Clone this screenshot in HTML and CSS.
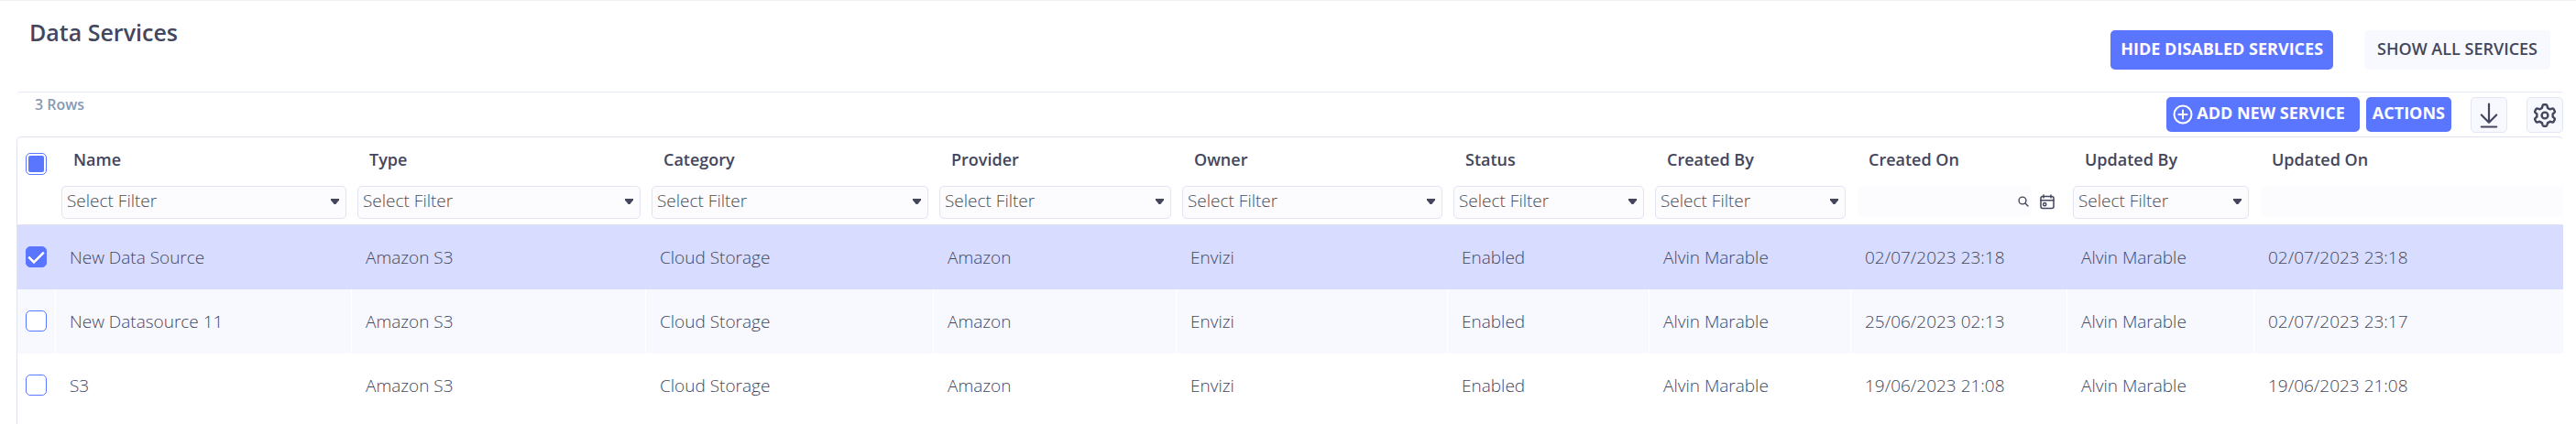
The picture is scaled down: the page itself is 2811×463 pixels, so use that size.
FILE: index.html
```html
<!DOCTYPE html>
<html lang="en">
<head>
<meta charset="utf-8">
<title>Data Services</title>
<link rel="stylesheet" href="styles.css">
</head>
<body>
<header class="page-head">
  <h1 class="title">Data Services</h1>
  <div class="head-actions">
    <button type="button" class="btn primary tall">HIDE DISABLED SERVICES</button>
    <button type="button" class="btn tall plain">SHOW ALL SERVICES</button>
  </div>
</header>
<main class="panel">
  <div class="toolbar">
    <span class="row-count">3 Rows</span>
    <div class="tools">
      <button type="button" class="btn primary with-icon"><svg width="22" height="22" viewBox="0 0 22 22" fill="none" stroke="currentColor" stroke-width="2" stroke-linecap="round" aria-hidden="true"><circle cx="11" cy="11" r="9.5"/><path d="M11 6.5v9M6.5 11h9"/></svg>ADD NEW SERVICE</button>
      <button type="button" class="btn primary">ACTIONS</button>
      <button type="button" class="btn-icon download" aria-label="Download"><svg width="20" height="28" viewBox="0 0 20 28" fill="none" stroke="currentColor" stroke-width="2.2" stroke-linecap="round" stroke-linejoin="round" aria-hidden="true"><path d="M10 1.5v20M1.8 13.5l8.2 8.3 8.2-8.3M1.8 26.5h16.4"/></svg></button>
      <button type="button" class="btn-icon" aria-label="Settings"><svg width="28" height="28" viewBox="-14 -14 28 28" fill="none" stroke="currentColor" stroke-width="2.4" stroke-linejoin="round" aria-hidden="true"><circle r="3.4"/><path d="M-3-8.200L-2.500-10.500Q-2.200-11.700-1.200-11.700H1.200Q2.200-11.700 2.500-10.500L3-8.200Q4.300-7.600 5.600-6.700L7.700-7.400Q9-7.800 9.600-6.800L10.800-4.700Q11.300-3.900 10.500-3.100L8.600-1.500Q8.800 0 8.600 1.500L10.500 3.100Q11.300 3.900 10.800 4.700L9.600 6.800Q9 7.800 7.700 7.400L5.600 6.700Q4.300 7.600 3 8.200L2.500 10.500Q2.200 11.700 1.200 11.700H-1.200Q-2.200 11.700-2.500 10.500L-3 8.200Q-4.300 7.600-5.600 6.700L-7.700 7.400Q-9 7.800-9.600 6.800L-10.800 4.700Q-11.300 3.900-10.500 3.100L-8.600 1.500Q-8.800 0-8.600-1.500L-10.500-3.100Q-11.300-3.900-10.800-4.700L-9.600-6.800Q-9-7.800-7.700-7.400L-5.600-6.700Q-4.300-7.600-3-8.200z"/></svg></button>
    </div>
  </div>
  <div class="table-wrap">
    <table class="grid">
      <colgroup>
        <col class="c-check"><col class="c-name"><col class="c-type"><col class="c-category"><col class="c-provider"><col class="c-owner"><col class="c-short"><col class="c-short"><col class="c-created"><col class="c-updated"><col>
      </colgroup>
      <thead>
        <tr>
          <th class="check-cell"><input type="checkbox" class="check mixed" aria-label="Select all rows"></th>
          <th scope="col"><label class="label" for="f-name">Name</label><div class="filter"><select id="f-name"><option>Select Filter</option></select></div></th>
          <th scope="col"><label class="label" for="f-type">Type</label><div class="filter"><select id="f-type"><option>Select Filter</option></select></div></th>
          <th scope="col"><label class="label" for="f-category">Category</label><div class="filter"><select id="f-category"><option>Select Filter</option></select></div></th>
          <th scope="col"><label class="label" for="f-provider">Provider</label><div class="filter"><select id="f-provider"><option>Select Filter</option></select></div></th>
          <th scope="col"><label class="label" for="f-owner">Owner</label><div class="filter"><select id="f-owner"><option>Select Filter</option></select></div></th>
          <th scope="col"><label class="label" for="f-status">Status</label><div class="filter"><select id="f-status"><option>Select Filter</option></select></div></th>
          <th scope="col"><label class="label" for="f-cby">Created By</label><div class="filter"><select id="f-cby"><option>Select Filter</option></select></div></th>
          <th scope="col"><label class="label" for="f-con">Created On</label><div class="date-filter"><div class="date-box"><input type="text" id="f-con"><svg width="12" height="12" viewBox="0 0 12 12" fill="none" stroke="currentColor" stroke-width="1.4" stroke-linecap="round" aria-hidden="true"><circle cx="5" cy="5" r="3.9"/><path d="M8 8l3 3"/></svg></div><button type="button" class="calendar" aria-label="Choose date"><svg width="16" height="17" viewBox="0 0 16 17" fill="none" stroke="currentColor" stroke-width="1.5" stroke-linecap="round" aria-hidden="true"><rect x="1" y="2.5" width="14" height="13" rx="2"/><path d="M1 6.7h14M4 1v3M12 1v3"/><circle cx="5.2" cy="11.2" r="1.6"/></svg></button></div></th>
          <th scope="col"><label class="label" for="f-uby">Updated By</label><div class="filter"><select id="f-uby"><option>Select Filter</option></select></div></th>
          <th scope="col" class="last"><label class="label" for="f-uon">Updated On</label><div class="date-filter"><div class="date-box open"><input type="text" id="f-uon"></div></div></th>
        </tr>
      </thead>
      <tbody>
        <tr class="selected"><td class="check-cell"><input type="checkbox" class="check" checked aria-label="Select New Data Source"></td><td>New Data Source</td><td>Amazon S3</td><td>Cloud Storage</td><td>Amazon</td><td>Envizi</td><td>Enabled</td><td>Alvin Marable</td><td>02/07/2023 23:18</td><td>Alvin Marable</td><td>02/07/2023 23:18</td></tr>
        <tr class="striped"><td class="check-cell"><input type="checkbox" class="check" aria-label="Select New Datasource 11"></td><td>New Datasource 11</td><td>Amazon S3</td><td>Cloud Storage</td><td>Amazon</td><td>Envizi</td><td>Enabled</td><td>Alvin Marable</td><td>25/06/2023 02:13</td><td>Alvin Marable</td><td>02/07/2023 23:17</td></tr>
        <tr><td class="check-cell"><input type="checkbox" class="check" aria-label="Select S3"></td><td>S3</td><td>Amazon S3</td><td>Cloud Storage</td><td>Amazon</td><td>Envizi</td><td>Enabled</td><td>Alvin Marable</td><td>19/06/2023 21:08</td><td>Alvin Marable</td><td>19/06/2023 21:08</td></tr>
      </tbody>
    </table>
  </div>
</main>
</body>
</html>
```
FILE: styles.css
```css
* { box-sizing: border-box; }

body {
  margin: 0;
  min-height: 100vh;
  display: flex;
  flex-direction: column;
  background: #fff;
  color: #43465c;
  font-family: "Open Sans", "Noto Sans", sans-serif;
  font-size: 19px;
  border-top: 1px solid #f0f0f0;
}

button, select, input { font: inherit; color: inherit; }
svg { flex: none; }

.page-head {
  display: flex;
  justify-content: space-between;
  align-items: flex-start;
  min-height: 99px;
  padding: 0 28px 0 32px;
}

.title {
  margin: 16px 0 0;
  font-size: 25px;
  line-height: 36px;
  font-weight: 600;
}

.head-actions { display: flex; gap: 34px; padding-top: 32px; }

.btn {
  height: 38px;
  padding: 0 7px 4px;
  border: 0;
  border-radius: 5px;
  font-size: 18px;
  line-height: 24px;
  font-weight: 700;
  white-space: nowrap;
}
.tall { height: 43px; padding: 0 11px 4px; }
.primary { background: #5a76ff; color: #fff; }
.plain { padding: 0 14px 4px; background: #f8f9ff; font-weight: 600; }
.with-icon { display: flex; align-items: center; gap: 4px; padding: 0 16px 4px 7px; }
.with-icon svg { margin-top: 4px; }

.panel {
  flex: 1;
  display: flex;
  flex-direction: column;
  margin: 0 14px 0 18px;
  border-top: 1px solid #e5eaf8;
  border-radius: 4px 4px 0 0;
}

.toolbar {
  display: flex;
  justify-content: space-between;
  height: 48px;
  padding-left: 20px;
}
.row-count {
  padding-top: 1px;
  font-size: 16px;
  line-height: 24px;
  font-weight: 600;
  color: #8799b5;
}
.tools { display: flex; align-items: flex-start; gap: 7px; padding-top: 5px; }

.btn-icon {
  display: grid;
  place-items: center;
  width: 40px;
  height: 39px;
  padding: 0;
  border: 1px solid #e2e5f3;
  border-radius: 5px;
  background: #f8f9ff;
}
.download { margin: 0 14px; }

.table-wrap {
  flex: 1;
  border: solid #e0e2f0;
  border-width: 1px 0 0 1px;
  border-radius: 5px 5px 0 0;
}

.grid {
  width: 100%;
  table-layout: fixed;
  border-collapse: separate;
  border-spacing: 0;
}
.c-check { width: 42px; }
.c-name { width: 323px; }
.c-type { width: 321px; }
.c-category { width: 314px; }
.c-provider { width: 265px; }
.c-owner { width: 296px; }
.c-short { width: 220px; }
.c-created { width: 236px; }
.c-updated { width: 204px; }

th {
  padding: 11px 6px 6px;
  border-bottom: 1px solid #dfe2f4;
  text-align: left;
  vertical-align: top;
  font-weight: 300;
}
th.last { padding-right: 0; }
.label {
  display: block;
  margin: 0 0 16px 13px;
  font-size: 18px;
  line-height: 26px;
  font-weight: 600;
}

.filter { position: relative; }
.filter::after {
  content: "";
  position: absolute;
  right: 8px;
  top: 14px;
  width: 9px;
  height: 6px;
  background: #43465c;
  clip-path: polygon(0 0, 100% 0, 100% 25%, 60% 100%, 40% 100%, 0 25%);
  pointer-events: none;
}
select {
  display: block;
  width: 100%;
  height: 36px;
  padding: 0 24px 4px 5px;
  border: 1px solid #e0e3f2;
  border-radius: 5px;
  background: #fcfcfe;
  color: #4b4c55;
  appearance: none;
}

.date-filter { display: flex; align-items: center; gap: 9px; height: 34px; padding-right: 8px; }
.date-box {
  flex: 1;
  min-width: 0;
  display: flex;
  align-items: center;
  height: 34px;
  padding-right: 3px;
  border-radius: 5px;
  background: #fcfcfe;
}
.last .date-filter { padding-right: 0; }
.open { border-radius: 5px 0 0 5px; }
.date-box input { flex: 1; min-width: 0; padding: 0 6px; border: 0; background: none; }
.calendar { display: flex; padding: 0; border: 0; background: none; }

td {
  height: 70px;
  padding: 0 15px 1px;
  font-weight: 300;
  line-height: 26px;
  border-right: 1px solid transparent;
}
.selected td { background: #d8ddff; }
.striped td { background: #f8f9ff; border-right-color: #fff; }
.striped td:last-child { border-right: 0; }

th.check-cell { padding: 17px 0 0 9px; }
td.check-cell { padding: 0 0 1px 9px; }
.check {
  display: block;
  width: 23px;
  height: 23px;
  margin: 0;
  border: 1px solid #5a76ff;
  border-radius: 5px;
  background: #fff;
  appearance: none;
}
.mixed { height: 24px; padding: 2px; background: #5a76ff content-box; }
.check:checked {
  display: grid;
  place-items: center;
  background: #5a76ff;
}
.check:checked::before {
  content: "";
  width: 14px;
  height: 7px;
  margin-bottom: 4px;
  border: solid #fff;
  border-width: 0 0 3px 3px;
  border-radius: 1px;
  transform: rotate(-45deg);
}
```
